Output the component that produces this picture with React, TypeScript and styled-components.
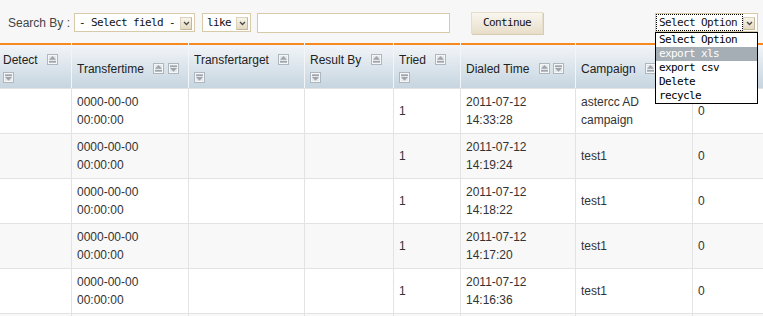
import React from 'react';
import styled, { createGlobalStyle } from 'styled-components';

const GlobalStyle = createGlobalStyle`
  html, body { margin: 0; padding: 0; background: #ffffff; }
  body { font-family: "Liberation Sans", Arial, sans-serif; font-size: 12px; color: #333; }
`;

const Page = styled.div`
  width: 763px;
  height: 316px;
  overflow: hidden;
  position: relative;
`;

const Toolbar = styled.div`
  display: flex;
  align-items: center;
  height: 43px;
  box-sizing: border-box;
  padding: 2px 5px 0 8px;
  background: #f7f7f7;
  position: relative;
  z-index: 2;
`;

const Label = styled.span`
  font-size: 12px;
  color: #444;
  margin-right: 4px;
  white-space: nowrap;
`;

const monoFont = `"DejaVu Sans Mono", "Liberation Mono", monospace`;

const SelectBox = styled.div<{ $w: number; $ml?: number }>`
  display: flex;
  align-items: center;
  width: ${(p) => p.$w}px;
  height: 19px;
  box-sizing: border-box;
  margin-left: ${(p) => p.$ml ?? 0}px;
  border: 1px solid #d6caa8;
  background: #fff;
  font-family: ${monoFont};
  font-size: 11px;
  letter-spacing: -0.62px;
  color: #111;
`;

const SelectText = styled.span<{ $focus?: boolean }>`
  flex: 1;
  height: 15px;
  line-height: 15px;
  padding-left: ${(p) => (p.$focus ? 2 : 4)}px;
  margin: 0 ${(p) => (p.$focus ? 1 : 0)}px;
  white-space: nowrap;
  overflow: hidden;
  outline: ${(p) => (p.$focus ? '1px dotted #000' : 'none')};
`;

const ArrowBox = styled.span`
  display: flex;
  align-items: center;
  justify-content: center;
  width: 12px;
  height: 13px;
  margin: 1px 2px 0 0;
  box-sizing: border-box;
  border: 1px solid #ddd3bb;
  border-right-color: #c5b89a;
  border-bottom-color: #c5b89a;
  background: linear-gradient(#f8f4ea, #e4d9c1);
`;

const TextInput = styled.div`
  width: 193px;
  height: 20px;
  box-sizing: border-box;
  margin-left: 6px;
  border: 1px solid #d6caa8;
  background: #fff;
`;

const Button = styled.div`
  display: flex;
  align-items: center;
  justify-content: center;
  width: 72px;
  height: 22px;
  box-sizing: border-box;
  margin-left: 21px;
  border: 1px solid #e6ddca;
  box-shadow: 1px 1px 0 #d8ccb0;
  background: linear-gradient(#f9f6ef, #e9dfca);
  font-family: ${monoFont};
  font-size: 11px;
  letter-spacing: -0.62px;
  color: #111;
`;

const ActionWrap = styled.div`
  position: relative;
  margin-left: auto;
`;

const Dropdown = styled.ul`
  position: absolute;
  left: 0;
  top: 19px;
  width: 103px;
  box-sizing: border-box;
  margin: 0;
  padding: 0;
  list-style: none;
  border: 1px solid #000;
  background: #fff;
  font-family: ${monoFont};
  font-size: 11px;
  letter-spacing: -0.62px;
  color: #000;
`;

const Option = styled.li<{ $active?: boolean }>`
  height: 14px;
  line-height: 14px;
  padding-left: 3px;
  white-space: nowrap;
  background: ${(p) => (p.$active ? '#a5adb5' : '#fff')};
  color: ${(p) => (p.$active ? '#fff' : '#000')};
`;

const TableWrap = styled.div`
  overflow: hidden;
  width: 763px;
`;

const Table = styled.table`
  margin-left: -2px;
  table-layout: fixed;
  width: 815px;
  border-collapse: separate;
  border-spacing: 0;
`;

const Th = styled.th`
  height: 45px;
  box-sizing: border-box;
  padding: 7px 3px 0 5px;
  text-align: left;
  vertical-align: middle;
  font-weight: normal;
  font-size: 12px;
  line-height: 18px;
  color: #222;
  background: linear-gradient(to bottom, #f7891f 0, #f7891f 2px, #f2f5f8 2px, #c6d5e0 100%);
  border-right: 1px solid #f3f6f8;
`;

const Td = styled.td<{ $alt?: boolean }>`
  height: 45px;
  box-sizing: border-box;
  padding: 0 3px 0 5px;
  vertical-align: middle;
  font-size: 12px;
  line-height: 18px;
  color: #333;
  background: ${(p) => (p.$alt ? '#f8f8f8' : '#ffffff')};
  border-top: 1px solid #e3e3e3;
  border-right: 1px solid #e3e3e3;
`;

const IconSvg = styled.svg<{ $first?: boolean }>`
  display: inline-block;
  vertical-align: middle;
  margin-left: ${(p) => (p.$first ? 6 : 0)}px;
  position: relative;
  top: -1px;
`;

const SortIcon: React.FC<{ dir: 'up' | 'down'; first?: boolean }> = ({ dir, first }) => (
  <IconSvg $first={first} width="11" height="11" viewBox="0 0 11 11">
    <rect x="0.5" y="0.5" width="10" height="10" fill="#e4e8ec" stroke="#aeb6be" />
    <rect x="1.5" y="1.5" width="8" height="8" fill="none" stroke="#f4f6f8" />
    {dir === 'up' ? (
      <>
        <polygon points="5.5,2 9,5.8 2,5.8" fill="#9da4ab" />
        <rect x="2" y="7" width="7" height="1.6" fill="#9da4ab" />
      </>
    ) : (
      <>
        <rect x="2" y="2.4" width="7" height="1.6" fill="#9da4ab" />
        <polygon points="2,5 9,5 5.5,8.8" fill="#9da4ab" />
      </>
    )}
  </IconSvg>
);

const Chevron = () => (
  <svg width="7" height="5" viewBox="0 0 7 5">
    <path d="M1 1 L3.5 3.5 L6 1" fill="none" stroke="#4a4a4a" strokeWidth="1.3" />
  </svg>
);

const columns = [
  { title: 'Detect', width: 74 },
  { title: 'Transfertime', width: 117 },
  { title: 'Transfertarget', width: 116 },
  { title: 'Result By', width: 89 },
  { title: 'Tried', width: 67 },
  { title: 'Dialed Time', width: 115 },
  { title: 'Campaign', width: 117 },
  { title: '', width: 120 },
];

const rows = [
  { time: '14:33:28', campaign: 'astercc AD campaign' },
  { time: '14:19:24', campaign: 'test1' },
  { time: '14:18:22', campaign: 'test1' },
  { time: '14:17:20', campaign: 'test1' },
  { time: '14:16:36', campaign: 'test1' },
];

const options = ['Select Option', 'export xls', 'export csv', 'Delete', 'recycle'];

export default function App() {
  return (
    <Page>
      <GlobalStyle />
      <Toolbar>
        <Label>Search By :</Label>
        <SelectBox $w={121}>
          <SelectText>- Select field -</SelectText>
          <ArrowBox>
            <Chevron />
          </ArrowBox>
        </SelectBox>
        <SelectBox $w={49} $ml={7}>
          <SelectText>like</SelectText>
          <ArrowBox>
            <Chevron />
          </ArrowBox>
        </SelectBox>
        <TextInput />
        <Button>Continue</Button>
        <ActionWrap>
          <SelectBox $w={103}>
            <SelectText $focus>Select Option</SelectText>
            <ArrowBox>
              <Chevron />
            </ArrowBox>
          </SelectBox>
          <Dropdown>
            {options.map((o, i) => (
              <Option key={o} $active={i === 1}>
                {o}
              </Option>
            ))}
          </Dropdown>
        </ActionWrap>
      </Toolbar>
      <TableWrap>
        <Table>
          <colgroup>
            {columns.map((c, i) => (
              <col key={i} style={{ width: c.width }} />
            ))}
          </colgroup>
          <thead>
            <tr>
              {columns.map((c, i) =>
                c.title ? (
                  <Th key={i}>
                    {c.title} <SortIcon dir="up" first /> <SortIcon dir="down" />
                  </Th>
                ) : (
                  <Th key={i} />
                )
              )}
            </tr>
          </thead>
          <tbody>
            {rows.map((r, i) => (
              <tr key={r.time}>
                <Td $alt={i % 2 === 1} />
                <Td $alt={i % 2 === 1}>
                  0000-00-00
                  <br />
                  00:00:00
                </Td>
                <Td $alt={i % 2 === 1} />
                <Td $alt={i % 2 === 1} />
                <Td $alt={i % 2 === 1}>1</Td>
                <Td $alt={i % 2 === 1}>
                  2011-07-12
                  <br />
                  {r.time}
                </Td>
                <Td $alt={i % 2 === 1}>{r.campaign}</Td>
                <Td $alt={i % 2 === 1}>0</Td>
              </tr>
            ))}
            <tr>
              {columns.map((c, i) => (
                <Td key={i} $alt />
              ))}
            </tr>
          </tbody>
        </Table>
      </TableWrap>
    </Page>
  );
}
